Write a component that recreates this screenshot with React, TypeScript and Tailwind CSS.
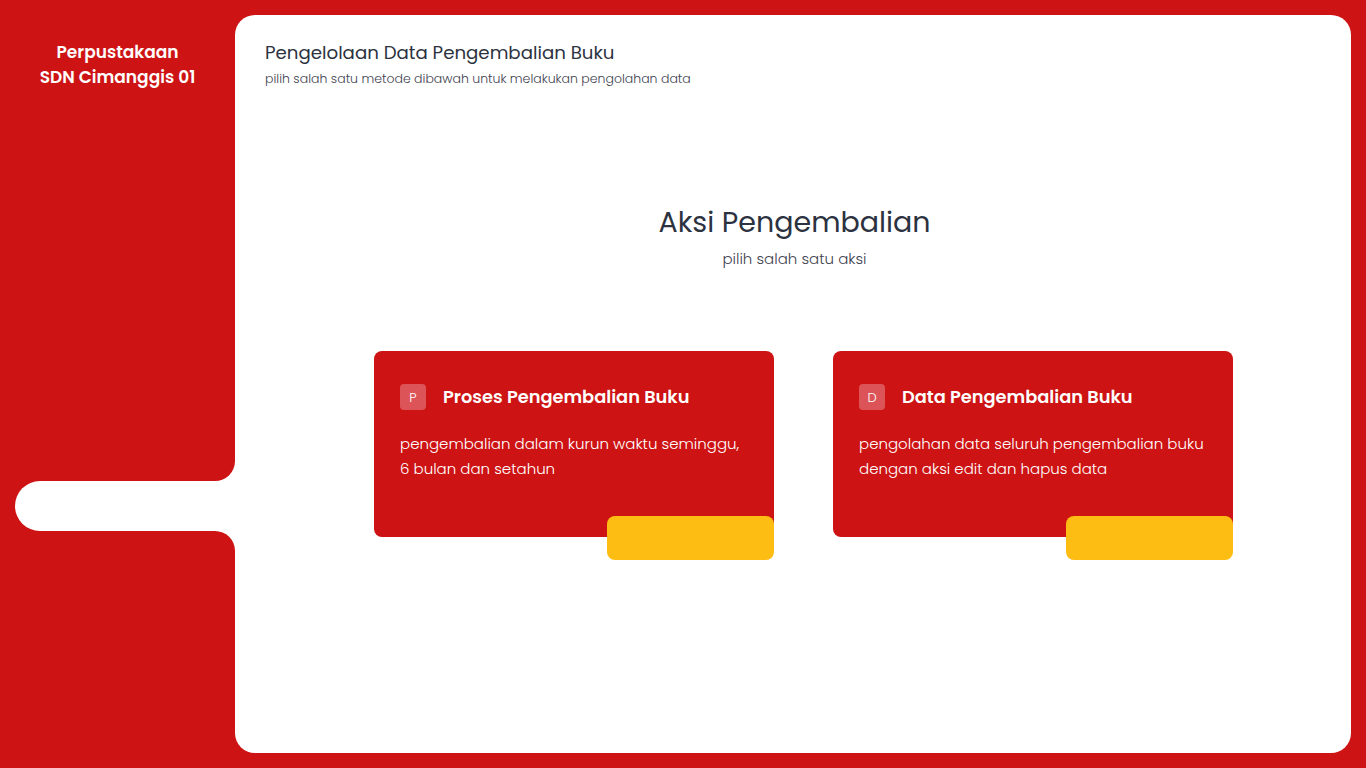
import React from "react";

const font = { fontFamily: "Poppins, Inter, 'Noto Sans', sans-serif" };

function Card({ letter, title, desc }: { letter: string; title: string; desc: string[] }) {
  return (
    <div className="relative w-[400px] h-[186px] bg-[#cd1313] rounded-[8px] pl-[26px] pr-[20px] pt-[33px]">
      <div className="flex items-center">
        <div className="w-[26px] h-[26px] rounded-[4px] bg-[#dc5458] text-white text-[13px] font-light flex items-center justify-center">
          {letter}
        </div>
        <div className="ml-[17px] text-white text-[17.8px] font-semibold">{title}</div>
      </div>
      <div className="mt-[20px] text-white text-[15px] leading-[25px] font-light">
        {desc.map((d, i) => (
          <div key={i}>{d}</div>
        ))}
      </div>
      <div className="absolute right-0 bottom-[-23px] w-[167px] h-[44px] bg-[#febd12] rounded-[8px]" />
    </div>
  );
}

export default function App() {
  return (
    <div className="w-full h-[768px] bg-[#cd1313] flex overflow-hidden" style={font}>
      <div className="w-[235px] shrink-0 flex flex-col">
        <div className="pt-[40px] text-center text-white text-[17px] font-semibold leading-[25px]">
          <div>Perpustakaan</div>
          <div>SDN Cimanggis 01</div>
        </div>
        <div className="relative mt-[391px] ml-[15px] h-[50px] bg-white rounded-l-full">
          <div className="absolute right-0 top-[-20px] w-[20px] h-[20px] bg-white">
            <div className="w-full h-full bg-[#cd1313] rounded-br-[20px]" />
          </div>
          <div className="absolute right-0 bottom-[-20px] w-[20px] h-[20px] bg-white">
            <div className="w-full h-full bg-[#cd1313] rounded-tr-[20px]" />
          </div>
        </div>
      </div>
      <div className="flex-1 mt-[15px] mb-[15px] mr-[15px] bg-white rounded-[20px] flex flex-col">
        <div className="pl-[30px] pt-[27px]">
          <div className="text-[18.2px] font-normal text-[#2c3240] leading-[22px]">Pengelolaan Data Pengembalian Buku</div>
          <div className="mt-[7px] text-[12.5px] font-light text-[#3f4350] leading-[16px]">
            pilih salah satu metode dibawah untuk melakukan pengolahan data
          </div>
        </div>
        <div className="mt-[117px] pl-[3px] text-center">
          <div className="text-[28.5px] font-normal text-[#2c3240] leading-[36px]">Aksi Pengembalian</div>
          <div className="mt-[9px] text-[15px] font-light text-[#3f4350] leading-[20px]">pilih salah satu aksi</div>
        </div>
        <div className="mt-[82px] ml-[139px] flex gap-[59px]">
          <Card
            letter="P"
            title="Proses Pengembalian Buku"
            desc={["pengembalian dalam kurun waktu seminggu,", "6 bulan dan setahun"]}
          />
          <Card
            letter="D"
            title="Data Pengembalian Buku"
            desc={["pengolahan data seluruh pengembalian buku", "dengan aksi edit dan hapus data"]}
          />
        </div>
      </div>
    </div>
  );
}
